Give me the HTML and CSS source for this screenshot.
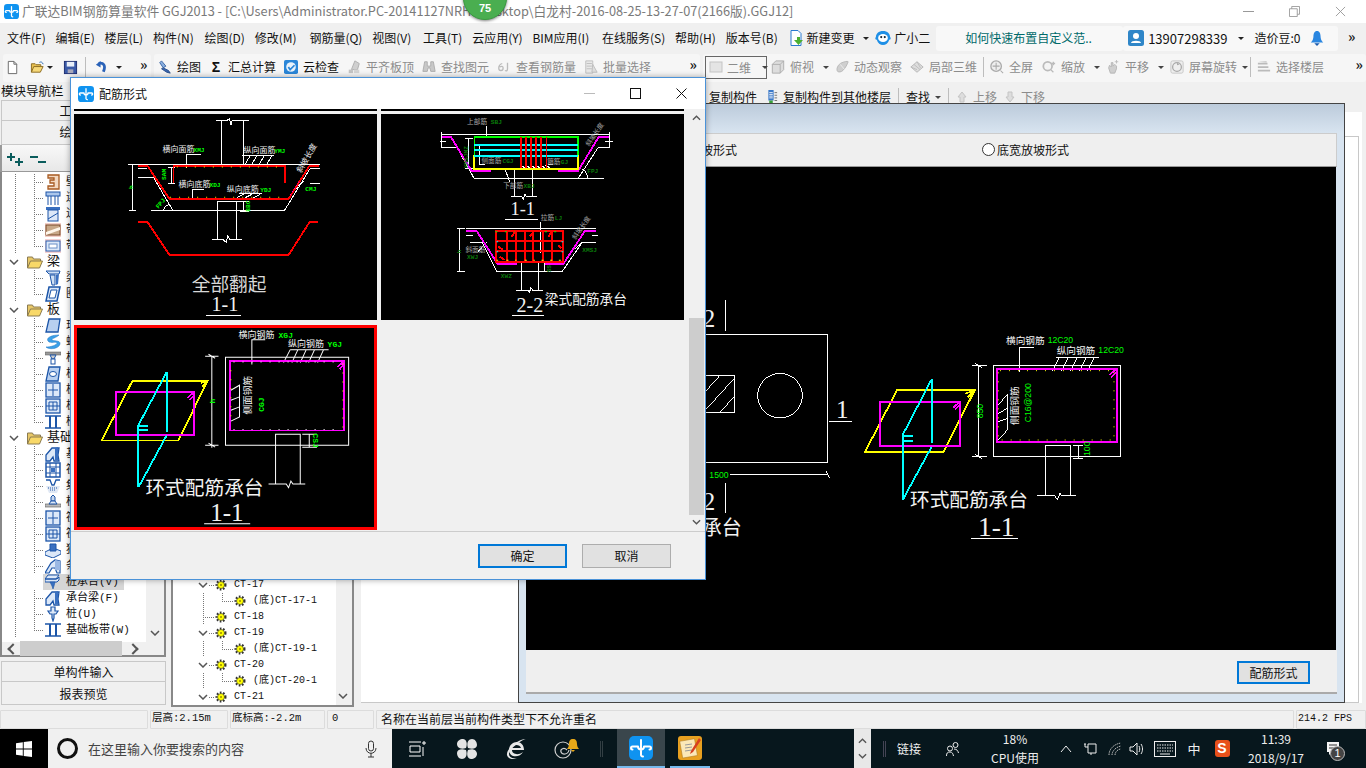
FILE: index.html
```html
<!DOCTYPE html>
<html lang="zh-CN">
<head>
<meta charset="utf-8">
<title>广联达BIM钢筋算量软件</title>
<link rel="stylesheet" href="styles.css">
</head>
<body>
<svg class="defs" aria-hidden="true">
  <symbol id="app" viewBox="0 0 24 24"><rect width="24" height="24" rx="5" fill="#0f93f0"/><path d="M12 4v14a2 2 0 0 0 2 2.500M3.500 10.500H9M20.500 10.500H15M3.500 10.500a1.500 1.500 0 0 0 0 3M20.500 10.500a1.500 1.500 0 0 1 0 3M9 10.500a3 3 0 0 0 6 0" fill="none" stroke="#fff" stroke-width="2" stroke-linecap="round"/></symbol>
  <symbol id="new" viewBox="0 0 16 16"><path d="M3.500 1.500h6l3 3v10h-9z" fill="#fff" stroke="#666"/><path d="M9.500 1.500v3h3" fill="none" stroke="#666"/></symbol>
  <symbol id="open" viewBox="0 0 16 16"><path d="M1.500 13V4h4l1 1h5v2" fill="#e8c050" stroke="#8a6a20"/><path d="M1.500 13l2.500-6h10l-3 6z" fill="#f6d878" stroke="#8a6a20"/><path d="M10 2.500c2-1 3.500 0 4 2" fill="none" stroke="#2a6ab0"/></symbol>
  <symbol id="save" viewBox="0 0 16 16"><rect x="1.500" y="1.500" width="13" height="13" fill="#3a5aa8" stroke="#1c2c70"/><rect x="4" y="2" width="8" height="5" fill="#e8eef8"/><rect x="5" y="10" width="6" height="4" fill="#aab"/></symbol>
  <symbol id="undo" viewBox="0 0 16 16"><path d="M5 3.500c5-1 8 2 5 9" fill="none" stroke="#2a62b8" stroke-width="3"/><path d="M2 5l5-4v7z" fill="#2a62b8"/></symbol>
  <symbol id="pen" viewBox="0 0 16 16"><path d="M4 1l5 6-3 2-4-6z" fill="#8ab0e0" stroke="#345ea0"/><path d="M6 9l6 3 2 3-4-1-6-4z" fill="#3a66b0" stroke="#234a88"/></symbol>
  <symbol id="cloud" viewBox="0 0 16 16"><rect width="16" height="16" rx="2" fill="#2a86d8"/><circle cx="8" cy="8" r="5.500" fill="#e8f2fb"/><path d="M5 8l2 3 5-5" fill="none" stroke="#2a86d8" stroke-width="2"/></symbol>
  <symbol id="align" viewBox="0 0 16 16"><path d="M9 1l5 3-2 7H5z" fill="#cfcfcf" stroke="#aaa"/><rect x="2" y="11" width="5" height="4" fill="#c4c4c4"/><rect x="8" y="11" width="6" height="4" fill="#d4d4d4"/></symbol>
  <symbol id="bino" viewBox="0 0 16 16"><path d="M3 2h3v5h4V2h3l2 11h-5l-1-4H7l-1 4H1z" fill="#c8c8c8" stroke="#aaa"/></symbol>
  <symbol id="sixj" viewBox="0 0 16 16"><path d="M6 4C3 5 2 7 2 9s1 3 2.500 3S7 11 7 9 5 7 3 8M12 3v7c0 2-1 3-3 2" fill="none" stroke="#bbb" stroke-width="1.500"/></symbol>
  <symbol id="batch" viewBox="0 0 16 16"><path d="M2 1h8v14H2z" fill="#e8e8e8" stroke="#bbb"/><path d="M3 4h6M3 7h6M3 10h6M10 5l5 9H9z" stroke="#bbb" fill="#ddd"/></symbol>
  <symbol id="flat" viewBox="0 0 14 14"><rect x="1" y="2" width="12" height="10" fill="#e4e4e4" stroke="#c4c4c4"/></symbol>
  <symbol id="cube" viewBox="0 0 16 16"><path d="M1.500 5l4-4h9v10l-4 4h-9z" fill="#ddd" stroke="#aaa"/><path d="M1.500 5h9v10M10.500 5l4-4" fill="none" stroke="#aaa"/></symbol>
  <symbol id="orbit" viewBox="0 0 16 16"><path d="M3 13c-2-2 0-8 5-10 3-1 6-2 7-1-1 3-3 7-6 10-2 2-5 2-6 1z" fill="#cfcfcf" stroke="#b4b4b4"/><path d="M6 5l5 6" stroke="#eee"/></symbol>
  <symbol id="part" viewBox="0 0 16 16"><path d="M1 8l7-6 7 6-7 6z" fill="#ddd" stroke="#b4b4b4"/><path d="M4.500 5l7 6M8 2l4 7M1 8l7 3" stroke="#bbb" fill="none"/></symbol>
  <symbol id="full" viewBox="0 0 16 16"><circle cx="7" cy="7" r="6" fill="#eee" stroke="#aaa" stroke-width="1.500"/><path d="M7 3v8M3 7h8M12 12l3 3" stroke="#aaa" stroke-width="1.200"/></symbol>
  <symbol id="zoom" viewBox="0 0 16 16"><circle cx="6.500" cy="7" r="5" fill="#f4f4f4" stroke="#bbb" stroke-width="2"/><path d="M10 11l3 3M13 2v4M11 4h4" stroke="#bbb" stroke-width="1.500"/></symbol>
  <symbol id="hand" viewBox="0 0 16 16"><path d="M3 9l1-3 2 2V3h2v4l2-2 2 2v3l-2 5H5z" fill="#cfcfcf" stroke="#b4b4b4"/><path d="M12 0v4M10 2h4" stroke="#bbb"/></symbol>
  <symbol id="rot" viewBox="0 0 16 16"><rect x="1" y="1" width="14" height="14" rx="2" fill="#eee" stroke="#c4c4c4"/><circle cx="8" cy="8" r="5" fill="none" stroke="#aaa" stroke-width="1.500"/><path d="M8 3l3 2-3 1z" fill="#aaa"/></symbol>
  <symbol id="floor" viewBox="0 0 16 16"><path d="M1 4h11M1 8h12M1 12h14" stroke="#bbb" stroke-width="2"/><path d="M2 2l9-1v2z" fill="#ccc"/></symbol>
  <symbol id="copy" viewBox="0 0 14 16"><rect x="4" y="0" width="6" height="12" fill="#3a78c8"/><path d="M5 3h4M5 5h4M5 7h4M5 9h4" stroke="#fff"/><rect x="5" y="12" width="4" height="3" fill="#38a038"/><path d="M11 3h3M11 6h3M11 9h3M11 12h3" stroke="#666"/></symbol>
  <symbol id="up" viewBox="0 0 12 12"><path d="M6 1l4 5H8v5H4V6H2z" fill="#ddd" stroke="#c4c4c4"/></symbol>
  <symbol id="down" viewBox="0 0 12 12"><path d="M6 11l4-5H8V1H4v5H2z" fill="#ddd" stroke="#c4c4c4"/></symbol>
  <symbol id="doc" viewBox="0 0 16 16"><path d="M3 .5h7l3 3v12H3z" fill="#fff" stroke="#2a7ad0"/><path d="M9 7h3v3h3l-4.500 5L6 10h3z" fill="#4caf30"/></symbol>
  <symbol id="bot" viewBox="0 0 18 18"><path d="M9 1c5 0 8 3 8 7 1 1 1 3-1 3-1 4-4 6-7 6s-6-2-7-6c-2 0-2-2-1-3 0-4 3-7 8-7z" fill="#1e8fe6"/><ellipse cx="9" cy="9" rx="5.500" ry="4.500" fill="#fff"/><circle cx="7" cy="8" r="1.200" fill="#123"/><circle cx="11" cy="8" r="1.200" fill="#123"/></symbol>
  <symbol id="user" viewBox="0 0 16 16"><rect width="16" height="16" rx="2.500" fill="#2f86c8"/><circle cx="8" cy="6" r="3" fill="#fff"/><path d="M3 13c0-3 10-3 10 0z" fill="#fff"/></symbol>
  <symbol id="bell" viewBox="0 0 16 18"><path d="M8 1c3 0 4 3 4 6 0 3 1 5 3 7H1c2-2 3-4 3-7 0-3 1-6 4-6z" fill="#2a86e0"/><path d="M5 15h6l-3 3z" fill="#1a5cb0"/></symbol>
  <symbol id="chev" viewBox="0 0 10 6"><path d="M1 1l4 4 4-4" fill="none" stroke="#555" stroke-width="1.500"/></symbol>
  <symbol id="folder" viewBox="0 0 16 14"><path d="M.5 13V2h5l1 2h7v2" fill="#e8c868" stroke="#8a7a50"/><path d="M.5 13l3-7h12l-3 7z" fill="#f8d868" stroke="#8a7a50"/></symbol>
  <symbol id="gear" viewBox="0 0 12 12"><circle cx="6" cy="6" r="4.300" fill="none" stroke="#333" stroke-width="2.400" stroke-dasharray="1.600 1.500"/><circle cx="6" cy="6" r="3.500" fill="#ff0" stroke="#333" stroke-width=".6"/><circle cx="6" cy="6" r="1" fill="#9a8a00"/></symbol>
  <symbol id="t1" viewBox="0 0 16 16"><path d="M3 1h11v14H3v-3h6V9H5V6h4V4H3z" fill="#f3d8c0" stroke="#a85a20" stroke-width="1.300"/></symbol>
  <symbol id="t2" viewBox="0 0 16 16"><rect x="1" y="2" width="14" height="4" fill="#aac6ec" stroke="#1c55a8"/><path d="M3 6v9M6 6v9M10 6v9M13 6v9" stroke="#1c55a8"/></symbol>
  <symbol id="t3" viewBox="0 0 16 16"><rect x="1" y="1" width="14" height="3" fill="#3a70c0"/><rect x="3" y="4" width="10" height="11" fill="#dce8f8" stroke="#1c55a8"/><path d="M3 13l10-6" stroke="#1c55a8"/></symbol>
  <symbol id="t4" viewBox="0 0 16 16"><rect x="0" y="1" width="16" height="14" fill="#f4d0c8"/><rect x="1" y="3" width="14" height="10" fill="#c8a888" stroke="#7a4a28"/><path d="M1 10l14-5v3L1 13z" fill="#fff6ea"/></symbol>
  <symbol id="t5" viewBox="0 0 16 16"><rect x="0" y="1" width="16" height="14" fill="#f4d0d0"/><rect x="1" y="3" width="14" height="10" fill="#dce8f8" stroke="#2a60b0"/><rect x="4" y="6" width="8" height="4" fill="#fff" stroke="#6a90c8"/></symbol>
  <symbol id="t6" viewBox="0 0 16 16"><path d="M1 1l14 0-1 3H4zM5 5h5v10H7z" fill="#cfe0f5" stroke="#1c55a8"/><path d="M11 5l3-1-1 10-2 1z" fill="#3a70c0"/></symbol>
  <symbol id="t7" viewBox="0 0 16 16"><path d="M4 1h11l-3 14H1z" fill="#dce8f8" stroke="#1c55a8" stroke-width="1.500"/><path d="M6 4h6l-2 8H4z" fill="#fff" stroke="#1c55a8"/></symbol>
  <symbol id="t8" viewBox="0 0 16 16"><path d="M4 1h11l-2 13H1z" fill="#b8d0f0" stroke="#1c55a8" stroke-width="1.300"/></symbol>
  <symbol id="t9" viewBox="0 0 16 16"><path d="M14 1C6 1 1 4 3 7s9 0 9 2-6 4-11 4c3 3 13 2 14-3 1-4-8-3-8-4 0-2 4-2 7-5z" fill="#3aa0e8" stroke="#1c70c0" stroke-width=".5"/></symbol>
  <symbol id="t10" viewBox="0 0 16 16"><rect x="0" y="2" width="16" height="3" fill="#999" stroke="#555" stroke-width=".5"/><path d="M5 5h6l-2 4H7z" fill="#ccc" stroke="#1c55a8"/><rect x="6" y="9" width="4" height="5" fill="#fff" stroke="#1c55a8"/></symbol>
  <symbol id="t11" viewBox="0 0 16 16"><path d="M4 1h11l-2 14H1z" fill="#b8d0f0" stroke="#1c55a8" stroke-width="1.300"/><ellipse cx="8" cy="8" rx="3.500" ry="2.500" fill="#fff" stroke="#1c55a8"/></symbol>
  <symbol id="t12" viewBox="0 0 16 16"><rect x="1" y="1" width="14" height="14" fill="#dce8f8" stroke="#1c55a8" stroke-width="1.300"/><path d="M8 2v12M3 8h10" stroke="#1c55a8"/></symbol>
  <symbol id="t13" viewBox="0 0 16 16"><rect x="1" y="1" width="14" height="14" fill="#dce8f8" stroke="#1c55a8" stroke-width="1.300"/><path d="M1 8h14M8 4v8M4 4h8v8H4z" fill="none" stroke="#1c55a8"/></symbol>
  <symbol id="t14" viewBox="0 0 16 16"><path d="M0 2h16M0 14h16" stroke="#1c55a8" stroke-width="1.600"/><path d="M5 2v12M11 2v12" stroke="#1c55a8" stroke-width="2"/></symbol>
  <symbol id="t15" viewBox="0 0 16 16"><path d="M1 15V9l6-7h7l-1 7 1 6H9l-1-4-3 4z" fill="#dce8f8" stroke="#1c55a8" stroke-width="1.300"/><path d="M10 2l3-1v13h-3z" fill="#3a70c0"/></symbol>
  <symbol id="t16" viewBox="0 0 16 16"><rect x="1" y="1" width="14" height="14" fill="#fff" stroke="#1c55a8" stroke-width="1.500"/><path d="M1 5h14M1 11h14M5 1v14M11 1v14" stroke="#1c55a8"/><rect x="6" y="6" width="4" height="4" fill="#3a70c0"/></symbol>
  <symbol id="t17" viewBox="0 0 16 16"><path d="M1 2h4l2 5h2l2-5h4" fill="none" stroke="#1c55a8" stroke-width="1.300"/><path d="M1 8h14l-3 7H4z" fill="#e0e8f4"/><path d="M3 10h10M5 12h6" stroke="#1c55a8" stroke-dasharray="1 1"/></symbol>
  <symbol id="t18" viewBox="0 0 16 16"><path d="M6 3l2-2 2 2v4H6z" fill="#c8d8ee" stroke="#1c55a8"/><rect x="0" y="10" width="16" height="3" fill="#bbb" stroke="#555" stroke-width=".6"/><path d="M4 10l2-3h4l2 3z" fill="#dce8f8" stroke="#1c55a8"/></symbol>
  <symbol id="t20" viewBox="0 0 16 16"><path d="M0 10l8-4 8 3v3l-8 4-8-3z" fill="#dce8f8" stroke="#1c55a8"/><path d="M5 2h6v7H5z" fill="#3a70c0" stroke="#1c55a8"/></symbol>
  <symbol id="t21" viewBox="0 0 16 16"><path d="M0 15l6-10 4-3 5 1v12h-3l-2-5H7l-3 5z" fill="#dce8f8" stroke="#1c55a8" stroke-width="1.200"/><path d="M10 2l5 1v9h-5z" fill="#9ab8e4"/></symbol>
  <symbol id="t22" viewBox="0 0 16 16"><path d="M3 1h11l-3 4H0zM0 5h12l2-2v3l-2 2H0z" fill="#dce8f8" stroke="#1c55a8"/><path d="M5 8h5l-1 4 -1 3-1-3z" fill="#3a70c0" stroke="#1c55a8" stroke-width=".6"/></symbol>
  <symbol id="t23" viewBox="0 0 16 16"><path d="M6 1h4v4h3l-2 3H9v4l-1 3-1-3V8H5L3 5h3z" fill="#dce8f8" stroke="#1c55a8" stroke-width="1.200"/></symbol>
</svg>

<div class="app">
  <header class="titlebar">
    <svg class="ic-title"><use href="#app"/></svg>
    <span class="title-text">广联达BIM钢筋算量软件 GGJ2013 - [C:\Users\Administrator.PC-20141127NRHI\Desktop\白龙村-2016-08-25-13-27-07(2166版).GGJ12]</span>
    <div class="winbtns">
      <span class="w-min"></span>
      <svg class="w-ic" viewBox="0 0 12 12"><path d="M.5 3h8.500v8.500H.5zM3 3V.5h8.500V9H9" fill="none" stroke="#999"/></svg>
      <svg class="w-ic" viewBox="0 0 12 12"><path d="M1 1l10 10M11 1L1 11" stroke="#999"/></svg>
    </div>
  </header>

  <nav class="menubar">
    <span>文件(F)</span><span>编辑(E)</span><span>楼层(L)</span><span>构件(N)</span><span class="gap1">绘图(D)</span><span>修改(M)</span><span class="gap3">钢筋量(Q)</span><span>视图(V)</span><span class="gap2">工具(T)</span><span>云应用(Y)</span><span>BIM应用(I)</span><span class="gap3">在线服务(S)</span><span>帮助(H)</span><span>版本号(B)</span>
    <span class="menu-ic"><svg class="i16"><use href="#doc"/></svg>新建变更<i class="arr"></i></span>
    <span class="menu-ic bot"><svg class="i16"><use href="#bot"/></svg>广小二</span>
    <span class="tipbox">如何快速布置自定义范..</span>
    <span class="userbox"><svg class="i16"><use href="#user"/></svg><span class="phone">13907298339</span><i class="arr"></i><b class="bean">造价豆:0</b><svg class="i16"><use href="#bell"/></svg></span>
    <span class="more more-end">»</span>
  </nav>

  <div class="toolbar">
    <div class="tgroup g-file">
      <svg class="i15"><use href="#new"/></svg>
      <svg class="i15 sp8"><use href="#open"/></svg><i class="arr"></i>
      <svg class="i15 sp8"><use href="#save"/></svg>
      <i class="sep"></i>
      <svg class="i15"><use href="#undo"/></svg><i class="arr a-undo"></i>
      <span class="more">»</span>
    </div>
    <div class="tgroup g-cmd">
      <span class="tool"><svg class="i14"><use href="#pen"/></svg>绘图</span>
      <span class="tool"><b class="sigma">Σ</b>汇总计算</span>
      <span class="tool"><svg class="i14"><use href="#cloud"/></svg>云检查</span>
      <span class="tool off"><svg class="i14"><use href="#align"/></svg>平齐板顶</span>
      <span class="tool off"><svg class="i14"><use href="#bino"/></svg>查找图元</span>
      <span class="tool off"><svg class="i14"><use href="#sixj"/></svg>查看钢筋量</span>
      <span class="tool off"><svg class="i14"><use href="#batch"/></svg>批量选择</span>
      <span class="more more-end">»</span>
    </div>
    <div class="tgroup g-view">
      <span class="combo off"><svg class="i14"><use href="#flat"/></svg><span class="combo-t">二维</span><i class="arr"></i></span>
      <span class="tool off"><svg class="i14"><use href="#cube"/></svg>俯视<i class="arr"></i></span>
      <span class="tool off"><svg class="i14"><use href="#orbit"/></svg>动态观察</span>
      <span class="tool off gap2"><svg class="i14"><use href="#part"/></svg>局部三维</span>
      <i class="sep"></i>
      <span class="tool off"><svg class="i14"><use href="#full"/></svg>全屏</span>
      <span class="tool off gap3"><svg class="i14"><use href="#zoom"/></svg>缩放<i class="arr"></i></span>
      <span class="tool off"><svg class="i14"><use href="#hand"/></svg>平移<i class="arr"></i></span>
      <span class="tool off"><svg class="i14"><use href="#rot"/></svg>屏幕旋转<i class="arr arr-tight"></i></span>
      <i class="sep sep-back"></i>
      <span class="tool off"><svg class="i14"><use href="#floor"/></svg>选择楼层</span>
      <span class="more more-end">»</span>
    </div>
  </div>

  <div class="main">
    <aside class="nav">
      <div class="nav-head">模块导航栏</div>
      <div class="nav-tab">工程设置</div>
      <div class="nav-tab nav-tab-b">绘图输入</div>
      <div class="nav-tools"><svg class="pm" viewBox="0 0 46 18"><path d="M7 4v8M3 8h8M15 9v8M11 13h8" stroke="#0a5c5c" stroke-width="2"/><path d="M26 8h8M34 13h8" stroke="#0a5c5c" stroke-width="2"/></svg></div>
      <div class="tree">
        <div class="trow leaf"><svg class="i16"><use href="#t1"/></svg>壁龛(I)</div>
        <div class="trow leaf"><svg class="i16"><use href="#t2"/></svg>连梁(G)</div>
        <div class="trow leaf"><svg class="i16"><use href="#t3"/></svg>过梁(G)</div>
        <div class="trow leaf"><svg class="i16"><use href="#t4"/></svg>带形窗(A)</div>
        <div class="trow leaf last"><svg class="i16"><use href="#t5"/></svg>带形洞(D)</div>
        <div class="trow fold"><svg class="chev"><use href="#chev"/></svg><svg class="ic-folder"><use href="#folder"/></svg>梁</div>
        <div class="trow leaf"><svg class="i16"><use href="#t6"/></svg>梁(L)</div>
        <div class="trow leaf last"><svg class="i16"><use href="#t7"/></svg>圈梁(E)</div>
        <div class="trow fold"><svg class="chev"><use href="#chev"/></svg><svg class="ic-folder"><use href="#folder"/></svg>板</div>
        <div class="trow leaf"><svg class="i16"><use href="#t8"/></svg>现浇板(B)</div>
        <div class="trow leaf"><svg class="i16"><use href="#t9"/></svg>螺旋板(B)</div>
        <div class="trow leaf"><svg class="i16"><use href="#t10"/></svg>柱帽(V)</div>
        <div class="trow leaf"><svg class="i16"><use href="#t11"/></svg>板洞(N)</div>
        <div class="trow leaf"><svg class="i16"><use href="#t12"/></svg>板受力筋(S)</div>
        <div class="trow leaf"><svg class="i16"><use href="#t13"/></svg>板负筋(F)</div>
        <div class="trow leaf last"><svg class="i16"><use href="#t14"/></svg>楼层板带(H)</div>
        <div class="trow fold"><svg class="chev"><use href="#chev"/></svg><svg class="ic-folder"><use href="#folder"/></svg>基础</div>
        <div class="trow leaf"><svg class="i16"><use href="#t15"/></svg>基础梁(F)</div>
        <div class="trow leaf"><svg class="i16"><use href="#t16"/></svg>筏板基础(M)</div>
        <div class="trow leaf"><svg class="i16"><use href="#t17"/></svg>集水坑(K)</div>
        <div class="trow leaf"><svg class="i16"><use href="#t18"/></svg>柱墩(Y)</div>
        <div class="trow leaf"><svg class="i16"><use href="#t12"/></svg>筏板主筋(R)</div>
        <div class="trow leaf"><svg class="i16"><use href="#t13"/></svg>筏板负筋(X)</div>
        <div class="trow leaf"><svg class="i16"><use href="#t20"/></svg>独立基础(D)</div>
        <div class="trow leaf"><svg class="i16"><use href="#t21"/></svg>条形基础(T)</div>
        <div class="trow leaf hl"><svg class="i16"><use href="#t22"/></svg>桩承台(V)</div>
        <div class="trow leaf"><svg class="i16"><use href="#t15"/></svg>承台梁(F)</div>
        <div class="trow leaf"><svg class="i16"><use href="#t23"/></svg>桩(U)</div>
        <div class="trow leaf last"><svg class="i16"><use href="#t14"/></svg>基础板带(W)</div>
        <div class="tree-sb"><svg class="chev-sb"><use href="#chev"/></svg></div>
      </div>
      <div class="hscroll"><span class="sb-l"></span><span class="sb-thumb"></span><span class="sb-r"></span></div>
      <div class="nav-tab nav-tab-c">单构件输入</div>
      <div class="nav-tab nav-tab-d">报表预览</div>
    </aside>

    <div class="work">
      <div class="subbar">
        <span class="tool"><svg class="i14"><use href="#copy"/></svg>复制构件</span>
        <span class="tool"><svg class="i14"><use href="#copy"/></svg>复制构件到其他楼层</span>
        <i class="sep"></i>
        <span class="tool">查找<i class="arr arr-tight"></i></span>
        <i class="sep"></i>
        <span class="tool off"><svg class="i12"><use href="#up"/></svg>上移</span>
        <span class="tool off"><svg class="i12"><use href="#down"/></svg>下移</span>
      </div>
      <div class="panes">
        <div class="ctree">
          <div class="crow par"><svg class="chev"><use href="#chev"/></svg><svg class="i12"><use href="#gear"/></svg>CT-17</div>
          <div class="crow child"><svg class="i12"><use href="#gear"/></svg><span>(底)CT-17-1</span></div>
          <div class="crow plain"><svg class="i12"><use href="#gear"/></svg>CT-18</div>
          <div class="crow par"><svg class="chev"><use href="#chev"/></svg><svg class="i12"><use href="#gear"/></svg>CT-19</div>
          <div class="crow child"><svg class="i12"><use href="#gear"/></svg><span>(底)CT-19-1</span></div>
          <div class="crow par"><svg class="chev"><use href="#chev"/></svg><svg class="i12"><use href="#gear"/></svg>CT-20</div>
          <div class="crow child"><svg class="i12"><use href="#gear"/></svg><span>(底)CT-20-1</span></div>
          <div class="crow par"><svg class="chev"><use href="#chev"/></svg><svg class="i12"><use href="#gear"/></svg>CT-21</div>
          <div class="ctree-sb"><svg class="chev-sb"><use href="#chev"/></svg></div>
        </div>
        <div class="whitearea"><div class="whitebox"></div></div>
      </div>
    </div>
  </div>

  <footer class="status">
    <span class="st st-a"></span>
    <span class="st st-b">层高:2.15m</span>
    <span class="st st-c">底标高:-2.2m</span>
    <span class="st st-d">0</span>
    <span class="st st-e">名称在当前层当前构件类型下不允许重名</span>
    <span class="st st-f">214.2 FPS</span>
  </footer>

  <div class="taskbar">
    <div class="start"><svg class="i16w" viewBox="0 0 16 16"><path d="M0 2.200l6.800-1V7.500H0zM7.700 1.100L16 0v7.500H7.700zM0 8.400h6.800v6.400L0 13.800zM7.700 8.400H16V16l-8.300-1.100z" fill="#fff"/></svg></div>
    <div class="search"><i class="cortana"></i><span>在这里输入你要搜索的内容</span><svg class="mic" viewBox="0 0 12 18"><rect x="3.500" y="1" width="5" height="10" rx="2.500" fill="none" stroke="#333"/><path d="M1 8c0 7 10 7 10 0M6 13v4M3 17h6" fill="none" stroke="#333"/></svg></div>
    <div class="tb-app"><svg class="tb18" viewBox="0 0 18 18"><path d="M1 2h12M1 16h12M2 6h10v6H2zM15 2h2v2h-2zM15 7v9" fill="none" stroke="#fff"/></svg></div>
    <div class="tb-app"><svg class="tb22" viewBox="0 0 22 22"><g fill="#e4e4e4"><path d="M10 10C4 12 1 9 1 6s3-5 6-5 5 4 3 9zM12 10c-2-6 1-9 4-9s5 3 5 6-4 5-9 3zM12 12c6-2 9 1 9 4s-3 5-6 5-5-4-3-9zM10 12c2 6-1 9-4 9s-5-3-5-6 4-5 9-3z"/></g></svg></div>
    <div class="tb-app"><svg class="tb22" viewBox="0 0 22 22"><path d="M3 12c0-5 4-8 8-8s7 3 7 8H6c0 4 6 6 11 2-3 6-14 6-14-2zM6 10h9c-1-4-8-4-9 0z" fill="#e8e8e8"/><path d="M1 17C0 11 12 1 20 1c-5 1-17 10-17 15 0 3 3 5 8 4-4 2-9 1-10-3z" fill="#e8e8e8"/></svg></div>
    <div class="tb-app tb-bell"><svg class="tb28" viewBox="0 0 28 22"><circle cx="10" cy="12" r="8" fill="none" stroke="#d0d0d0" stroke-width="1.200"/><path d="M14 12c-3-3-7-1-6 2s7 3 8-2" fill="none" stroke="#d0d0d0" stroke-width="1.200"/><path d="M20 1c3 0 4 2 4 5 0 2 1 4 2 5H14c1-1 2-3 2-5 0-3 1-5 4-5zM18 12h4l-2 2z" fill="#e8a818"/></svg></div>
    <i class="tb-sep"></i>
    <div class="tb-active"><svg class="tb26"><use href="#app"/></svg></div>
    <div class="tb-open"><svg class="tb26" viewBox="0 0 24 24"><rect width="24" height="24" rx="3" fill="#e8a020"/><rect x="3" y="4" width="15" height="17" fill="#fbe8b8" stroke="#a87820" stroke-width=".5" transform="rotate(-10 10 12)"/><path d="M7 9l7-1M7 12l7-1M7 15l7-1" stroke="#999"/><path d="M21 2l-8 13-1 3 3-2 8-12z" fill="#d84020"/></svg></div>
    <div class="tray">
      <div class="t-scroll"><svg class="t-up"><use href="#chev"/></svg><svg class="t-dn"><use href="#chev"/></svg></div>
      <i class="tb-sep2"></i>
      <span class="t-link">链接</span>
      <svg class="tr16" viewBox="0 0 16 16"><circle cx="10.500" cy="4" r="2.500" fill="none" stroke="#eee"/><circle cx="5" cy="7.500" r="2.500" fill="none" stroke="#eee"/><path d="M1.500 15c0-3 1-4 3.500-4s3 2 3.500 4M9 8c3 0 4 2 4.500 4" fill="none" stroke="#eee"/></svg>
      <div class="t-cpu"><span>18%</span><span>CPU使用</span></div>
      <i></i>
      <svg class="tr14" viewBox="0 0 14 14"><path d="M2 10l5-6 5 6" fill="none" stroke="#eee"/></svg>
      <svg class="tr16" viewBox="0 0 16 16"><path d="M6 3h8v9H6zM6 6H3V2M9 12v2M3 3v1" fill="none" stroke="#eee"/></svg>
      <svg class="tr16" viewBox="0 0 16 16"><path d="M2 14c0-6 5-11 12-12M5 14c0-4 4-8 9-9M8 14c0-3 3-6 6-6" fill="none" stroke="#bbb" stroke-dasharray="1.500 .8"/></svg>
      <svg class="tr16" viewBox="0 0 16 16"><path d="M1 6h3l4-4v12l-4-4H1zM10 5c1 2 1 4 0 6M12 3c2 3 2 7 0 10" fill="none" stroke="#eee"/></svg>
      <svg class="tr22" viewBox="0 0 22 16"><rect x=".5" y=".5" width="21" height="15" fill="none" stroke="#eee"/><path d="M3 4h16M3 7h16M3 10h16" stroke="#eee" stroke-dasharray="1.500 1"/><path d="M6 13h10" stroke="#eee"/></svg>
      <span class="t-ime">中</span>
      <span class="t-sogou">S</span>
      <div class="t-clock"><span>11:39</span><span>2018/9/17</span></div>
      <div class="t-note"><svg class="tr16" viewBox="0 0 16 16"><path d="M2 1h12v10H7l-3 3v-3H2z" fill="#f4f4f4"/><path d="M4 4h8M4 7h8" stroke="#333"/></svg><b>1</b></div>
    </div>
  </div>

  <!-- underlying modal with the large drawing -->
  <section class="modal">
    <div class="modal-head"></div>
    <div class="modal-radios">
      <label class="rad-a"><i class="radio"></i>底面放坡形式</label>
      <label class="rad-b"><i class="radio"></i>底宽放坡形式</label>
    </div>
    <svg class="cad-canvas" viewBox="526 167 810 483">
      <g transform="translate(700 290) scale(.33333)">
        <path class="w" d="M-400 133H383V517H-400M-90 256H104V367H-90M-90 367L10 256M-40 367L60 256M10 367L104 264M60 367L104 318M-40 300L-10 256"/>
        <circle class="w" cx="240" cy="317" r="67"/>
        <text class="t75 tw ser" x="408" y="385">1</text>
        <path class="w" d="M387 394H456M76 30V122M76 580V670M90 553H385M378 543L388 563"/>
        <text class="t75 tw ser" x="8" y="110">2</text>
        <text class="t75 tw ser" x="8" y="660">2</text>
        <text class="t26 tg sans" x="28" y="563">1500</text>
        <text class="t60 tw cjk" x="5" y="735">承台</text>
        <path class="y t2" d="M495 486H730L825 299H592Z M795 311L825 301M803 322L825 301"/>
        <path class="m t2" d="M540 336H780V467H540Z M760 352L778 338M765 358L778 345"/>
        <path class="c t2" d="M695 268V460M695 268L608 435M608 435V630M608 630L695 470M608 438H638M608 452H638"/>
        <path class="w" d="M880 226H1262V499H880ZM835 226V499M817 226H862M817 499H862M825 220L845 232M825 493L845 505M1036 618V466H1112V618M1012 618H1065L1072 630L1080 610L1085 618H1127M1120 466H1150M1120 505H1150M1137 466V505M958 247V172H1002M1068 203H1197M1058 243L1078 203M1085 243L1105 203M1112 243L1132 203M1138 243L1158 203M1162 243L1182 203M895 345L922 313V420L895 450M895 370L922 355M895 395L922 385"/>
        <path class="m t2" d="M890 237H1250V456H890Z M1228 255L1248 238M1233 263L1248 248"/>
        <path class="dot" d="M895 247V450M1242 247V450M905 450H1240M900 242H1240"/>
        <text class="t29 tw cjk" x="918" y="162">横向钢筋</text><text class="t26 tg sans" x="1043" y="160">12C20</text>
        <text class="t29 tw cjk" x="1070" y="192">纵向钢筋</text><text class="t26 tg sans" x="1195" y="190">12C20</text>
        <text class="t26 tg sans" transform="translate(848 385) rotate(-90)">850</text>
        <text class="t29 tw cjk" transform="translate(955 405) rotate(-90)">侧面钢筋</text>
        <text class="t26 tg sans" transform="translate(994 397) rotate(-90)">C16@200</text>
        <text class="t26 tg sans" transform="translate(1171 498) rotate(-90)">100</text>
        <text class="t59 tw cjk" x="630" y="650">环式配筋承台</text>
        <text class="t82 tw ser" x="834" y="738">1-1</text>
        <path class="w" d="M813 745H953"/>
      </g>
    </svg>
    <div class="modal-foot"><button class="btn-blue" type="button">配筋形式</button></div>
  </section>

  <!-- front dialog -->
  <section class="dlg">
    <div class="dlg-title">
      <svg class="ic-dlg"><use href="#app"/></svg>
      <span>配筋形式</span>
      <div class="dlg-btns">
        <i class="d-min"></i>
        <svg class="d-ic" viewBox="0 0 11 11"><rect x=".5" y=".5" width="10" height="10" fill="none" stroke="#111"/></svg>
        <svg class="d-ic" viewBox="0 0 11 11"><path d="M.5.5l10 10M10.500.5l-10 10" stroke="#111"/></svg>
      </div>
    </div>
    <div class="dlg-body">
      <div class="dlg-grid">
        <div class="stub"></div><div class="stub"></div>
        <div class="cell">
          <svg class="cad-cell" viewBox="12 27 908 618" preserveAspectRatio="none">
            <path class="w" d="M175 177H748M453 47V177M521 47V177M438 47H470L478 40L482 60L486 47H537M187 177V316M178 177H198M178 316H198M243 316H643M203 217H250L308 316M203 190H232M643 316L720 190H748M442 403V290H520M500 290V403M427 403H458L468 412L473 392L478 403H515M303 186V235M293 186H315M293 235H315M280 316C285 300 295 298 300 300M349 190V148H393M520 186L540 152M540 186L560 152M562 186L582 152M585 186L605 152M515 152H612M367 286V254H403M500 278L520 268M525 278L545 268M550 278L570 268M505 266H575M520 290V318M510 290H535M510 318H535M720 235H748M680 245L700 228M665 262L685 245"/>
            <path class="r t2" d="M205 182H232L298 282H655L718 182H745M310 233V183H645V233"/>
            <path class="r t2" d="M205 351H232L298 450H655L718 351H743"/>
            <path class="yd" d="M300 277H640M320 186H640"/>
            <path class="md" d="M660 270L690 225"/>
            <text class="t24 tw cjk" x="277" y="140">横向面筋</text><text class="t20 tg mono" x="370" y="140">XMJ</text>
            <text class="t24 tw cjk" x="520" y="145">纵向面筋</text><text class="t20 tg mono" x="612" y="145">YMJ</text>
            <text class="t24 tw cjk" x="325" y="245">横向底筋</text><text class="t20 tg mono" x="418" y="245">XDJ</text>
            <text class="t24 tw cjk" x="470" y="262">纵向底筋</text><text class="t20 tg mono" x="570" y="262">YDJ</text>
            <text class="t20 tg mono" x="705" y="258">CMJ</text>
            <text class="t20 tg mono" transform="translate(288 225) rotate(-90)">SAM</text>
            <text class="t20 tg mono" transform="translate(190 252) rotate(-90)">h</text>
            <text class="t20 tg mono" transform="translate(265 312) rotate(-50)">FPJ</text>
            <text class="t20 tg mono" transform="translate(540 320) rotate(-90)">BBC</text>
            <text class="t24 tw cjk" transform="translate(692 205) rotate(-60)">斜坡长度</text>
            <text class="t56 tw4 cjk" x="365" y="558">全部翻起</text>
            <text class="t60 tw ser" x="424" y="618">1-1</text>
            <path class="w" d="M408 631H512"/>
          </svg>
        </div>
        <div class="cell">
          <svg class="cad-cell" viewBox="9 27 908 618" preserveAspectRatio="none">
            <path class="w" d="M190 88H693M190 127H236L288 220H678M600 220L660 127H693M190 80V130M185 110H205M680 110H705M693 80V130M410 195V275M464 195V275M398 275H430L436 282L440 268L445 275H475M324 96V62M380 190L395 232M628 220C628 205 618 192 610 192M303 120V178H320M510 178H525M272 100V190M262 100H285M262 190H285M425 180L440 188M440 180L455 188M455 180L470 188M470 180L485 188M485 180L500 188M500 180L515 188"/>
            <path class="m t2" d="M192 95H218L280 197H338M540 197H600L662 95H692"/>
            <path class="g t2" d="M289 150V96H600V150"/>
            <path class="y t2" d="M287 150V193H600V150"/>
            <path class="c t2" d="M288 120H600M288 135H600M288 152H600"/>
            <path class="r t2" d="M428 96V190M443 96V190M459 96V190M474 96V190M489 96V190M505 96V190"/>
            <text class="t20c tgr cjk" x="267" y="57">上部筋</text><text class="t20 tg2 mono" x="338" y="57">SBJ</text>
            <text class="t20c tgr cjk" x="310" y="173">侧面筋</text><text class="t20 tg2 mono" x="373" y="173">CGJ</text>
            <text class="t20c tgr cjk" x="507" y="177">箍筋</text><text class="t20 tg2 mono" x="548" y="177">GJ</text>
            <text class="t20c tgr cjk" x="375" y="248">下部筋</text><text class="t20 tg2 mono" x="436" y="248">XBJ</text>
            <text class="t20 tg2 mono" x="627" y="203">FPJ</text>
            <text class="t20 tg2 mono" transform="translate(270 190) rotate(-90)">XMSJMZ</text>
            <text class="t20c tgr cjk" transform="translate(632 125) rotate(-55)">斜坡长度</text>
            <text class="t55 tw ser" x="397" y="330">1-1</text>
            <path class="w" d="M380 343H478"/>
            <path class="w" d="M263 370H652M245 370V500M238 370H260M238 500H260M275 412H312L355 498H553L612 412H652M263 390H285M640 390H660M430 475V555M482 475V555M415 555H448L454 562L458 548L463 555H495M488 350V445M300 440L325 412M590 432L610 412M360 498H405M500 475V498"/>
            <path class="m t2" d="M265 377H295L358 476H417M500 476H556L620 378H652"/>
            <path class="r t3" d="M355 378H555V470H355ZM388 378V470M415 378V470M440 378V470M465 378V470M493 378V470M520 378V470M355 408H555M355 438H555M400 395L410 382M455 395L465 382M510 395L520 382M360 425L375 435M365 455L380 465M540 420L550 430"/>
            <path class="gd" d="M352 380H410M500 380H555"/>
            <path class="cd" d="M355 410H360M355 440H360M550 410H555M550 440H555"/>
            <path class="yd2" d="M355 466H360M385 466H415M440 466H470M490 466H555"/>
            <text class="t20c tgr cjk" x="488" y="345">拉筋</text><text class="t20 tg2 mono" x="530" y="345">LJ</text>
            <text class="t20c tgr cjk" x="262" y="440">斜面筋</text><text class="t20 tg2 mono" x="267" y="462">XWJ</text>
            <text class="t20 tg2 mono" x="612" y="442">XMSJ</text>
            <text class="t20 tg2 mono" x="368" y="518">XWZ</text>
            <text class="t20 tg2 mono" transform="translate(518 502) rotate(-90)">SS</text>
            <text class="t20 tg2 mono" transform="translate(250 445) rotate(-90)">h</text>
            <text class="t20c tgr cjk" transform="translate(592 405) rotate(-55)">斜坡长度</text>
            <text class="t60 tw ser" x="415" y="622">2-2</text>
            <path class="w" d="M402 632H498"/>
            <text class="t41 tw cjk" x="500" y="597">梁式配筋承台</text>
          </svg>
        </div>
        <div class="cell sel">
          <svg class="cad-cell" viewBox="21 18 890 598" preserveAspectRatio="none">
            <path class="y t2" d="M95 356H325L412 177H187Z M392 183L412 179M396 195L412 179"/>
            <path class="m t2" d="M137 210H372V339H137Z M352 228L370 212M358 234L370 222"/>
            <path class="c t2" d="M290 150V330M290 150L205 310M205 310V497M205 497L290 340M205 312H233M205 325H233"/>
            <path class="w" d="M466 106H835V370H466ZM425 103V378M405 103H445M405 370H445M415 97L435 109M415 364L435 376M616 487V337H690V487M595 487H648L655 498L662 478L668 487H705M696 337H740M696 376H740M717 337V376M545 128V53H585M660 83H775M640 122L660 83M665 122L683 83M690 122L708 83M715 122L733 83M742 122L760 83M482 205L508 190V285L482 298M482 235L508 225M482 265L508 255"/>
            <path class="m t2" d="M480 117H822V326H480Z M802 135L820 118M808 142L820 128"/>
            <path class="yd" d="M482 145V300M818 125V320"/>
            <path class="wd" d="M490 323H810M490 120H810"/>
            <text class="t27 tw cjk" x="505" y="47">横向钢筋</text><text class="t24 tg mono" x="625" y="47">XGJ</text>
            <text class="t27 tw cjk" x="653" y="76">纵向钢筋</text><text class="t24 tg mono" x="772" y="76">YGJ</text>
            <text class="t24 tg mono" transform="translate(436 245) rotate(-90)">h</text>
            <text class="t29 tw cjk" transform="translate(541 278) rotate(-90)">侧面钢筋</text>
            <text class="t24 tg mono" transform="translate(580 270) rotate(-90)">CGJ</text>
            <text class="t24 tg mono" transform="translate(727 335) rotate(90)">CSJ</text>
            <text class="t59 tw cjk" x="226" y="520">环式配筋承台</text>
            <text class="t75 tw ser" x="420" y="598">1-1</text>
            <path class="w" d="M402 606H540"/>
          </svg>
        </div>
        <div class="cell blank"></div>
      </div>
      <div class="vscroll"><svg class="chev-up"><use href="#chev"/></svg><span class="vthumb"></span><svg class="chev-dn"><use href="#chev"/></svg></div>
    </div>
    <div class="dlg-foot">
      <button class="btn-blue btn-ok" type="button">确定</button>
      <button class="btn-gray" type="button">取消</button>
    </div>
  </section>

  <div class="badge">75</div>
</div>
</body>
</html>
```

FILE: styles.css
```css
* { box-sizing: border-box; }
html, body { margin: 0; height: 100%; overflow: hidden; }
body { font: 12px/1 "Noto Sans CJK SC", "Liberation Sans", sans-serif; color: #111; background: #f0f0f0; }
.defs { position: absolute; width: 0; height: 0; }
i { font-style: normal; }
svg { display: block; flex: none; }

.app { position: relative; width: 1366px; height: 768px; display: flex; flex-direction: column; overflow: hidden; }

/* title */
.titlebar { height: 23px; background: #fff; display: flex; align-items: center; padding-left: 4px; flex: none; }
.ic-title { width: 15px; height: 15px; }
.title-text { margin-left: 3px; color: #7a7a7a; font-size: 12.750px; white-space: nowrap; }
.winbtns { margin-left: auto; display: flex; align-items: center; gap: 35px; padding-right: 20px; }
.w-min { width: 11px; height: 1px; background: #999; }
.w-ic { width: 11px; height: 11px; }

/* menu */
.menubar { height: 31px; display: flex; align-items: center; gap: 9.800px; padding: 0 0 1px 7px; flex: none; background: #f0f0f0; position: relative; }
.gap1 { margin-left: 1px; }
.gap2 { margin-left: 2px; }
.gap3 { margin-left: 3px; }
.menu-ic { display: flex; align-items: center; gap: 3px; }
.menu-ic.bot { margin-left: -3px; }
.i16 { width: 16px; height: 16px; }
.i15 { width: 15px; height: 15px; }
.i14 { width: 14px; height: 14px; }
.i12 { width: 12px; height: 12px; }
.arr { display: inline-block; width: 0; height: 0; border: 3px solid transparent; border-top: 3px solid #222; border-bottom: 0; flex: none; }
.menu-ic .arr { margin-left: 5px; }
.tipbox { width: 187px; height: 25px; margin-left: -4px; background: #f8f8f8; border-radius: 3px; color: #006a6a; display: flex; align-items: center; padding-left: 29px; }
.userbox { width: 215px; height: 25px; margin-left: -9.800px; background: #f8f8f8; border-radius: 3px; display: flex; align-items: center; padding-left: 5px; gap: 4px; }
.phone { font-size: 13px; }
.userbox .arr { margin: 0 7px 0 6px; }
.bean { font-weight: 400; margin-right: 4px; }
.more { font-size: 14px; font-weight: 700; color: #222; line-height: 1; align-self: flex-start; margin-top: 3px; }
.more-end { margin-left: auto; margin-right: 3px; }
.menubar .more-end { margin-top: 6px; margin-left: 0; }

/* toolbar */
.toolbar { height: 28px; display: flex; gap: 3px; padding-left: 3px; flex: none; }
.tgroup { height: 28px; background: #f6f6f6; border-radius: 3px; display: flex; align-items: center; flex: none; padding-bottom: 2px; }
.g-file { width: 148px; padding-left: 2px; gap: 2px; }
.g-file .more { margin-left: 16px; }
.g-file .sep { margin: 0 6px 0 5px; }
.a-undo { margin-left: 5px; }
.sp8 { margin-left: 8px; }
.g-cmd { width: 546px; padding-left: 4px; gap: 8px; }
.g-view { flex: 1; padding-left: 2px; gap: 6px; }
.g-view .sep-back { margin-left: -4px; }
.tool { display: flex; align-items: center; gap: 5px; white-space: nowrap; flex: none; }
.tool.off, .combo.off { color: #8c8c8c; }
.tool .arr { margin-left: 4px; border-top-color: #444; }
.tool .arr-tight { margin-left: 0; }
.sigma { width: 14px; text-align: center; font: 700 14px "Liberation Sans", sans-serif; color: #111; }
.sep { width: 1px; height: 20px; background: #bdbdbd; flex: none; }
.combo { width: 62px; height: 23px; border: 1px solid #666; display: flex; align-items: center; gap: 4px; padding-left: 3px; margin-right: -2px; flex: none; }
.combo-t { line-height: 21px; white-space: nowrap; }
.combo .arr { margin-left: 7px; border-top-color: #444; }

/* main */
.main { flex: 1; display: flex; min-height: 0; }
.nav { width: 166px; display: flex; flex-direction: column; flex: none; }
.nav-head { height: 18px; padding-left: 1px; font-size: 12.500px; line-height: 18px; }
.nav-tab { height: 21px; background: #f0f0f0; border: 1px solid #c8c8c8; text-align: center; line-height: 19px; margin-left: 1px; }
.nav-tab-b { height: 24px; line-height: 22px; border-top: 0; }
.nav-tab-c { margin-top: 4px; }
.nav-tab-d { height: 23px; line-height: 23px; border-top: 0; }
.nav-tools { height: 27px; display: flex; align-items: center; padding-left: 2px; background: linear-gradient(#f8f8f8, #e8e8e8); border: solid #999; border-width: 0 2px 1px; }
.pm { width: 46px; height: 18px; }
.tree { height: 470px; background: #fff; padding-top: 2px; border: solid #888; border-width: 0 2px; position: relative; overflow: hidden; font: 11px/16px "Liberation Mono", "Noto Sans CJK SC", monospace; }
.trow { height: 16px; display: flex; align-items: center; white-space: nowrap; }
.trow.leaf { padding-left: 43px; gap: 5px;
  background:
    repeating-linear-gradient(to bottom, #777 0 1px, transparent 1px 2px) 13px 0/1px 100% no-repeat,
    repeating-linear-gradient(to bottom, #777 0 1px, transparent 1px 2px) 32px 0/1px 100% no-repeat,
    repeating-linear-gradient(to right, #777 0 1px, transparent 1px 2px) 32px 8px/10px 1px no-repeat; }
.trow.last { background:
    repeating-linear-gradient(to bottom, #777 0 1px, transparent 1px 2px) 13px 0/1px 100% no-repeat,
    repeating-linear-gradient(to bottom, #777 0 1px, transparent 1px 2px) 32px 0/1px 8px no-repeat,
    repeating-linear-gradient(to right, #777 0 1px, transparent 1px 2px) 32px 8px/10px 1px no-repeat; }
.trow.fold { padding-left: 7px; font-size: 13px; }
.chev { width: 10px; height: 6px; }
.ic-folder { width: 16px; height: 14px; margin: 0 4px 0 8px; }
.trow.hl { background:
    repeating-linear-gradient(to bottom, #777 0 1px, transparent 1px 2px) 13px 0/1px 100% no-repeat,
    linear-gradient(#d6d6d6, #d6d6d6) 41px 0/81px 100% no-repeat; }
.tree-sb { position: absolute; right: 0; top: 0; bottom: 0; width: 18px; background: #f0f0f0; }
.chev-sb { position: absolute; right: 4px; bottom: 6px; width: 10px; height: 6px; }
.hscroll { height: 15px; background: #f0f0f0; border: solid #888; border-width: 0 2px 2px; display: flex; align-items: center; position: relative; }
.sb-l, .sb-r { width: 18px; height: 15px; position: relative; }
.sb-l::before, .sb-r::before { content: ""; position: absolute; left: 7px; top: 4px; width: 6px; height: 6px; border: solid #555; border-width: 0 0 2px 2px; transform: rotate(45deg); }
.sb-r::before { transform: rotate(225deg); }
.sb-thumb { width: 102px; height: 15px; background: #cdcdcd; }

.work { flex: 1; display: flex; flex-direction: column; min-width: 0; }
.subbar { height: 30px; padding: 8px 0 0 524px; display: flex; align-self: stretch; gap: 7px; flex: none; align-items: flex-start; }
.subbar .sep { height: 16px; margin-top: -2px; }
.subbar .tool { line-height: 14px; }
.panes { flex: 1; display: flex; min-height: 0; padding-left: 5px; }
.ctree { width: 183px; height: 595px; background: #fff; border: 2px solid #888; border-top: 0; display: flex; flex-direction: column; justify-content: flex-end; position: relative; font: 10px/16px "Liberation Mono", "Noto Sans CJK SC", monospace; }
.crow { height: 16px; display: flex; align-items: center; padding-left: 25px; flex: none; }
.crow .i12 { margin: 0 7px 0 7px; }
.crow.par { background: repeating-linear-gradient(to right, #777 0 1px, transparent 1px 2px) 36px 8px/6px 1px no-repeat; }
.crow.plain { padding-left: 35px; background:
    repeating-linear-gradient(to bottom, #777 0 1px, transparent 1px 2px) 30px 0/1px 100% no-repeat,
    repeating-linear-gradient(to right, #777 0 1px, transparent 1px 2px) 30px 8px/12px 1px no-repeat; }
.crow.child { padding-left: 54px; background:
    repeating-linear-gradient(to bottom, #777 0 1px, transparent 1px 2px) 30px 0/1px 100% no-repeat,
    repeating-linear-gradient(to bottom, #777 0 1px, transparent 1px 2px) 49px 0/1px 8px no-repeat,
    repeating-linear-gradient(to right, #777 0 1px, transparent 1px 2px) 49px 8px/11px 1px no-repeat; }
.ctree-sb { position: absolute; right: 0; top: 0; bottom: 0; width: 16px; background: #f0f0f0; }
.whitearea { width: 1001px; height: 591px; margin-left: 7px; background: #fff; padding: 24px 3px 0 0; }
.whitebox { height: 100%; border: 1px solid #c8c8c8; border-left: 0; }

/* status */
.status { height: 19px; display: flex; gap: 2px; flex: none; background: #f0f0f0; font: 10.500px/15px "Liberation Mono", "Noto Sans CJK SC", monospace; }
.st { border: 1px solid #dcdcdc; border-radius: 1px; padding-left: 1px; white-space: nowrap; overflow: hidden; }
.st-a { width: 148px; }
.st-b { width: 78px; }
.st-c { width: 95px; }
.st-d { width: 47px; padding-left: 4px; }
.st-e { width: 918px; font: 12px/15px "Noto Sans CJK SC", sans-serif; padding-left: 4px; }
.st-f { flex: 1; font-size: 10px; }

/* taskbar */
.taskbar { height: 39px; display: flex; align-items: center; background: #07171d; flex: none; position: relative; }
.start { width: 48px; height: 39px; background: #000; display: flex; align-items: center; justify-content: center; }
.i16w { width: 16px; height: 16px; }
.search { width: 344px; height: 39px; background: #f0f0f0; display: flex; align-items: center; padding-left: 9px; font-size: 13px; color: #444; }
.cortana { width: 21px; height: 21px; border: 3px solid #111; border-radius: 50%; margin-right: 10px; flex: none; }
.mic { width: 12px; height: 18px; margin-left: auto; margin-right: 15px; }
.tb-app { width: 50px; height: 39px; display: flex; align-items: center; justify-content: center; flex: none; }
.tb18 { width: 18px; height: 18px; }
.tb22 { width: 22px; height: 22px; }
.tb28 { width: 28px; height: 22px; }
.tb26 { width: 24px; height: 24px; }
.tb-sep { width: 3px; height: 16px; margin: 0 14px 0 8px; border: solid #333f44; border-width: 0 1px; flex: none; }
.tb-active { width: 48px; height: 39px; background: #3a464c; border-bottom: 2px solid #76b9ed; display: flex; align-items: center; justify-content: center; flex: none; }
.tb-open { width: 40px; height: 39px; margin-left: 5px; border-bottom: 2px solid #76b9ed; display: flex; align-items: center; justify-content: center; flex: none; }
.tray { margin-left: 144px; height: 39px; display: grid; grid-template-columns: 17px 26px 24px 64px 60px 9px 24px 24px 26px 18px 38px 20px 36px 72px 42px; align-items: center; justify-items: center; color: #eee; flex: none; }
.t-scroll { width: 17px; height: 39px; background: #e8e8e8; display: flex; flex-direction: column; align-items: center; justify-content: space-between; padding: 9px 0; }
.t-up, .t-dn { width: 9px; height: 6px; }
.t-up { transform: rotate(180deg); }
.tb-sep2 { width: 3px; height: 16px; border: solid #445; border-width: 0 1px; }
.t-link { font-size: 12px; white-space: nowrap; }
.tr16 { width: 16px; height: 16px; }
.tr14 { width: 14px; height: 14px; }
.tr22 { width: 22px; height: 16px; }
.t-cpu, .t-clock { display: flex; flex-direction: column; align-items: center; gap: 7px; white-space: nowrap; }
.t-ime { font-size: 13px; }
.t-sogou { width: 15px; height: 17px; background: #e8501a; border-radius: 3px; color: #fff; font: 700 14px/17px "Liberation Sans", sans-serif; text-align: center; }
.t-note { position: relative; }
.t-note b { position: absolute; left: 5px; top: 5px; width: 15px; height: 15px; border-radius: 50%; background: #444; border: 1px solid #bbb; color: #fff; font: 400 11px/13px "Liberation Sans", sans-serif; text-align: center; }

/* underlying modal */
.modal { position: absolute; left: 518px; top: 103px; width: 827px; height: 600px; border: 1px solid #444; background: #d8e4f0; padding: 0 7px; display: flex; flex-direction: column; }
.modal-head { height: 29px; margin: 0 -7px; background: linear-gradient(#bccbdb, #d8e4f0); flex: none; }
.modal-radios { height: 34px; background: #efefef; border: 1px solid #ccc; border-bottom-color: #999; position: relative; flex: none; }
.modal-radios label { position: absolute; top: 9px; display: flex; align-items: center; gap: 2px; white-space: nowrap; }
.rad-a { left: 123px; }
.rad-b { left: 455px; }
.radio { width: 13px; height: 13px; border: 1px solid #333; border-radius: 50%; background: #fff; }
.cad-canvas { width: 810px; height: 483px; background: #000; flex: none; }
.modal-foot { height: 44px; background: #efefef; border-bottom: 2px solid #aaa; display: flex; justify-content: flex-end; padding: 11px 27px 0 0; flex: none; }
.btn-blue, .btn-gray { font: 12px/1 "Noto Sans CJK SC", sans-serif; color: #111; background: #e1e1e1; padding: 0; }
.btn-blue { width: 73px; height: 23px; border: 2px solid #0078d7; }
.btn-gray { width: 89px; height: 24px; border: 1px solid #adadad; }

/* front dialog */
.dlg { position: absolute; left: 70px; top: 77px; width: 636px; height: 503px; background: #f0f0f0; border: 1px solid #4a92d8; box-shadow: 0 0 6px rgba(0,0,0,.35); display: flex; flex-direction: column; }
.dlg-title { height: 31px; background: #fff; display: flex; align-items: center; padding-left: 7px; flex: none; gap: 5px; }
.ic-dlg { width: 16px; height: 16px; }
.dlg-btns { margin-left: auto; display: flex; align-items: center; gap: 35px; padding-right: 18px; }
.d-min { width: 11px; height: 1px; background: #bbb; }
.d-ic { width: 11px; height: 11px; }
.dlg-body { height: 422px; display: flex; flex: none; }
.dlg-grid { width: 617px; padding-left: 3px; display: grid; grid-template-columns: 303px 303px; column-gap: 4px; grid-template-rows: 2px 206px 207px; row-gap: 3px; }
.stub { background: #000; }
.cell { background: #000; min-height: 0; }
.cell.sel { margin-top: 2px; border: 3px solid #f00; }
.cell.blank { background: #f0f0f0; }
.cad-cell { width: 100%; height: 100%; }
.vscroll { width: 15px; margin-left: 1px; background: #f0f0f0; position: relative; }
.chev-up, .chev-dn { position: absolute; left: 3px; width: 9px; height: 6px; }
.chev-up { top: 6px; transform: rotate(180deg); }
.chev-dn { bottom: 6px; }
.vthumb { position: absolute; left: 0; top: 209px; width: 15px; height: 197px; background: #cdcdcd; }
.dlg-foot { flex: 1; border-top: 1px solid #ccc; display: flex; padding: 12px 0 0 407px; gap: 15px; align-items: flex-start; }
.btn-ok { width: 89px; height: 24px; }

/* badge */
.badge { position: absolute; left: 463px; top: -24px; width: 44px; height: 44px; border-radius: 50%; background: #4aae50; border: 1px solid #3a9a40; box-shadow: 0 1px 3px rgba(0,0,0,.5); color: #fff; font: 700 11px/1 "Liberation Sans", sans-serif; text-align: center; padding-top: 26px; }

/* CAD styling */
.w, .y, .m, .c, .r, .g { fill: none; stroke-width: 3; shape-rendering: crispEdges; }
.w { stroke: #fff; }
.y { stroke: #ff0; }
.m { stroke: #f0f; }
.c { stroke: #0ff; }
.r { stroke: #f00; }
.g { stroke: #0f0; }
.t2 { stroke-width: 5.500; }
.t3 { stroke-width: 6; }
.dot, .yd, .wd, .md, .gd, .cd, .yd2 { fill: none; stroke-width: 3; stroke-dasharray: 3 24; }
.dot, .yd, .yd2 { stroke: #ff0; }
.wd { stroke: #fff; }
.md { stroke: #f0f; stroke-dasharray: 3 8; }
.gd { stroke: #0f0; stroke-dasharray: 6 22; }
.cd { stroke: #0ff; stroke-dasharray: 6 20; }
.yd2 { stroke-dasharray: 6 20; }
.tw { fill: #f2f2f2; }
.tw4 { fill: #d8d8d8; }
.tgr { fill: #a8a8a8; }
.tg { fill: #0f0; }
.tg2 { fill: #0a7a0a; }
.cjk { font-family: "Noto Sans CJK SC", sans-serif; }
.ser { font-family: "Liberation Serif", serif; }
.sans { font-family: "Liberation Sans", sans-serif; }
.mono { font-family: "Liberation Mono", monospace; font-weight: 700; }
.t20 { font-size: 18.500px; }
.t20c { font-size: 20px; }
.t24 { font-size: 24px; }
.t26 { font-size: 26px; }
.t27 { font-size: 27px; }
.t29 { font-size: 29px; }
.t41 { font-size: 41px; }
.t55 { font-size: 55px; }
.t56 { font-size: 56px; }
.t59 { font-size: 59px; }
.t60 { font-size: 60px; }
.t75 { font-size: 75px; }
.t82 { font-size: 82px; }
```
